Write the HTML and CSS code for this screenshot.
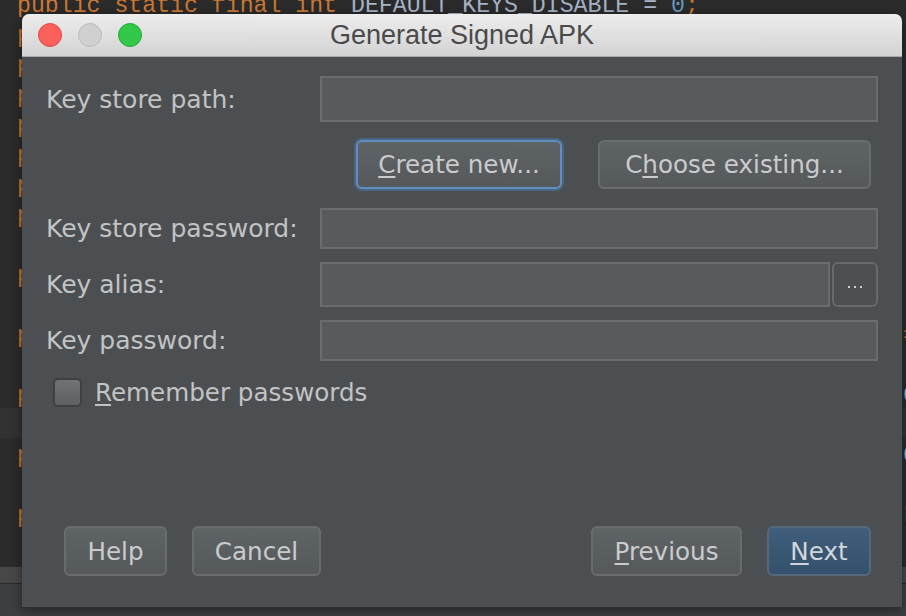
FILE: index.html
```html
<!DOCTYPE html>
<html>
<head>
<meta charset="utf-8">
<title>Generate Signed APK</title>
<link rel="stylesheet" href="styles.css">
</head>
<body>
<div class="editor">
  <div class="code">
    <div class="line"><span class="src"><span class="kw">public static final int</span> <span class="const">DEFAULT_KEYS_DISABLE</span> = <span class="num">0</span><span class="kw">;</span></span></div>
    <div class="line"><span class="src"><span class="kw">public static final int</span> <span class="const">DEFAULT_KEYS_DIALER</span> = <span class="num">1</span><span class="kw">;</span></span></div>
    <div class="line"><span class="src"><span class="kw">public static final int</span> <span class="const">DEFAULT_KEYS_SHORTCUT</span> = <span class="num">2</span><span class="kw">;</span></span></div>
    <div class="line"><span class="src"><span class="kw">public static final int</span> <span class="const">DEFAULT_KEYS_SEARCH_LOCAL</span> = <span class="num">3</span><span class="kw">;</span></span></div>
    <div class="line"><span class="src"><span class="kw">public static final int</span> <span class="const">DEFAULT_KEYS_SEARCH_GLOBAL</span> = <span class="num">4</span><span class="kw">;</span></span></div>
    <div class="line"><span class="src"><span class="kw">private int</span> mDefaultKeyMode = <span class="const">DEFAULT_KEYS_DISABLE</span><span class="kw">;</span></span></div>
    <div class="line"><span class="src"><span class="kw">private</span> SpannableStringBuilder mDefaultKeySsb = <span class="kw">null;</span></span></div>
    <div class="line"><span class="src"><span class="kw">protected static final int</span>[] <span class="const">FOCUSED_STATE_SET</span> = {}<span class="kw">;</span></span></div>
    <div class="line"><span class="src"> </span></div>
    <div class="line"><span class="src"><span class="kw">public void</span> setDefaultKeyMode(<span class="kw">int</span> mode) {</span></div>
    <div class="line"><span class="src"> </span></div>
    <div class="line"><span class="src"><span class="kw">public final boolean</span> requestWindowFeature(<span class="kw">int</span> featureId) {</span><span class="kw">=</span></div>
    <div class="line"><span class="src"> </span></div>
    <div class="line"><span class="src"><span class="kw">private void</span> ensureSearchManager() {</span>C</div>
    <div class="line cur"><span class="src"> </span></div>
    <div class="line"><span class="src"><span class="kw">protected void</span> onCreate(Bundle savedInstanceState) {</span>C</div>
    <div class="line"><span class="src"> </span></div>
    <div class="line"><span class="src"><span class="kw">public void</span> setContentView(<span class="kw">int</span> layoutResID) {</span><span class="str">L</span></div>
    <div class="line"><span class="src"> </span></div>
    <div class="line"><span class="src"><span class="kw">public</span> Window getWindow() {</span></div>
    <div class="line"><span class="src"> </span></div>
  </div>
</div>
<div class="hscroll"></div>
<div class="status"></div>

<div class="dialog">
  <div class="titlebar">
    <div class="lights">
      <span class="light red"></span>
      <span class="light gray"></span>
      <span class="light green"></span>
    </div>
    <div class="title">Generate Signed APK</div>
    <div></div>
  </div>
  <div class="panel">
    <div class="row row-path">
      <span class="lbl">Key store path:</span>
      <div class="field"></div>
    </div>
    <div class="actions">
      <button class="btn btn-create focus"><u>C</u>reate new...</button>
      <button class="btn btn-choose">C<u>h</u>oose existing...</button>
    </div>
    <div class="row row-pass">
      <span class="lbl">Key store password:</span>
      <div class="field"></div>
    </div>
    <div class="row row-alias">
      <span class="lbl">Key alias:</span>
      <div class="field"></div>
      <div class="browse"><i></i><i></i><i></i></div>
    </div>
    <div class="row row-keypass">
      <span class="lbl">Key password:</span>
      <div class="field"></div>
    </div>
    <div class="check-row">
      <span class="check"></span>
      <span class="check-label"><u>R</u>emember passwords</span>
    </div>
    <div class="footer">
      <div class="group">
        <button class="btn btn-help">Help</button>
        <button class="btn btn-cancel">Cancel</button>
      </div>
      <div class="group">
        <button class="btn btn-prev"><u>P</u>revious</button>
        <button class="btn btn-next primary"><u>N</u>ext</button>
      </div>
    </div>
  </div>
</div>
</body>
</html>
```

FILE: styles.css
```css
html, body {
  margin: 0;
  padding: 0;
}
body {
  width: 906px;
  height: 616px;
  overflow: hidden;
  position: relative;
  background: #2b2b2b;
  font-family: "DejaVu Sans", sans-serif;
}

/* background editor */
.editor {
  height: 567px;
  overflow: hidden;
}
.code {
  margin-top: -12px;
  font-family: "Liberation Mono", monospace;
  font-size: 23.2px;
  color: #a9b7c6;
}
.line {
  height: 30px;
  line-height: 36px;
  white-space: pre;
  padding-left: 17px;
}
.line.cur {
  background: #323232;
}
.src {
  display: inline-block;
  width: 63.7ch;
  overflow: hidden;
  vertical-align: top;
}
.kw { color: #cc7832; }
.num { color: #6897bb; }
.const { color: #a5b3c6; }
.str { color: #6a8759; }

.hscroll {
  height: 16px;
  background: #474747;
}
.status {
  height: 33px;
  border-top: 1px solid #2a2a2a;
  background: #3c3f41;
}

/* dialog window */
.dialog {
  position: absolute;
  left: 22px;
  top: 14px;
  width: 880px;
  height: 593px;
  display: flex;
  flex-direction: column;
  background: #4b4f52;
  border-radius: 7px 7px 0 0;
  overflow: hidden;
  box-shadow: 0 3px 12px rgba(0, 0, 0, 0.45);
}
.titlebar {
  height: 42px;
  flex: none;
  border-bottom: 1px solid #a9a9a9;
  background: linear-gradient(#ededed, #d3d3d3);
  display: grid;
  grid-template-columns: 1fr auto 1fr;
  align-items: center;
}
.lights {
  display: flex;
  gap: 16px;
  padding-left: 16px;
}
.light {
  width: 24px;
  height: 24px;
  border-radius: 50%;
  box-sizing: border-box;
}
.light.red { background: #fc605b; border: 1px solid #de4a45; }
.light.gray { background: #d0d0d0; border: 1px solid #bcbcbc; }
.light.green { background: #34c84a; border: 1px solid #25a838; }
.title {
  font-family: "Liberation Sans", Arial, sans-serif;
  font-size: 27px;
  color: #4a4a4a;
  padding-top: 1px;
}

.panel {
  flex: 1;
  display: flex;
  flex-direction: column;
  padding: 19px 24px 31px 24px;
}
.row {
  display: flex;
  align-items: center;
}
.lbl {
  width: 274px;
  flex: none;
  font-size: 25px;
  color: #c3c3c3;
}
.field {
  flex: 1;
  align-self: stretch;
  box-sizing: border-box;
  border: 2px solid #6b6c6d;
  background: #575b5d;
}
.row-path { height: 46px; }
.row-pass { height: 41px; margin-top: 19px; }
.row-alias { height: 45px; margin-top: 13px; }
.row-keypass { height: 41px; margin-top: 13px; }

.browse {
  width: 46px;
  height: 45px;
  margin-left: 2px;
  box-sizing: border-box;
  border: 2px solid #666a6c;
  border-radius: 6px;
  background: #4c5053;
  display: flex;
  align-items: center;
  justify-content: center;
  gap: 4px;
  padding-top: 4px;
}
.browse i {
  width: 2px;
  height: 2px;
  background: #cfcfcf;
}

.actions {
  display: flex;
  justify-content: flex-end;
  gap: 36px;
  margin-top: 18px;
  padding-right: 7px;
}

.btn {
  box-sizing: border-box;
  height: 49px;
  padding: 0;
  border: 2px solid #686c6e;
  border-radius: 6px;
  background: linear-gradient(#5e6366, #55595c);
  color: #cbcbcb;
  font-family: "DejaVu Sans", sans-serif;
  font-size: 24.6px;
  text-align: center;
}
.btn u, .check-label u {
  text-decoration-thickness: 2px;
  text-underline-offset: 3px;
}
.btn-create { width: 206px; }
.btn-choose { width: 273px; }
.btn.focus {
  border-color: #5f8fc2;
  box-shadow: 0 0 0 2px rgba(78, 128, 185, 0.45);
}

.check-row {
  display: flex;
  align-items: center;
  margin-top: 17px;
  padding-left: 7px;
  height: 29px;
}
.check {
  width: 29px;
  height: 29px;
  box-sizing: border-box;
  border: 2px solid #3e4042;
  border-radius: 5px;
  background: linear-gradient(#707274, #5e6062);
}
.check-label {
  margin-left: 13px;
  font-size: 24.6px;
  color: #c3c3c3;
}

.footer {
  margin-top: auto;
  display: flex;
  justify-content: space-between;
  padding: 0 7px 0 18px;
}
.group {
  display: flex;
  gap: 25px;
}
.footer .btn { height: 50px; }
.btn-help { width: 103px; }
.btn-cancel { width: 129px; }
.btn-prev { width: 151px; }
.btn-next { width: 104px; }
.btn.primary {
  background: linear-gradient(#405d7b, #33506c);
  border-color: #56687b;
  color: #d2d6da;
}
```
